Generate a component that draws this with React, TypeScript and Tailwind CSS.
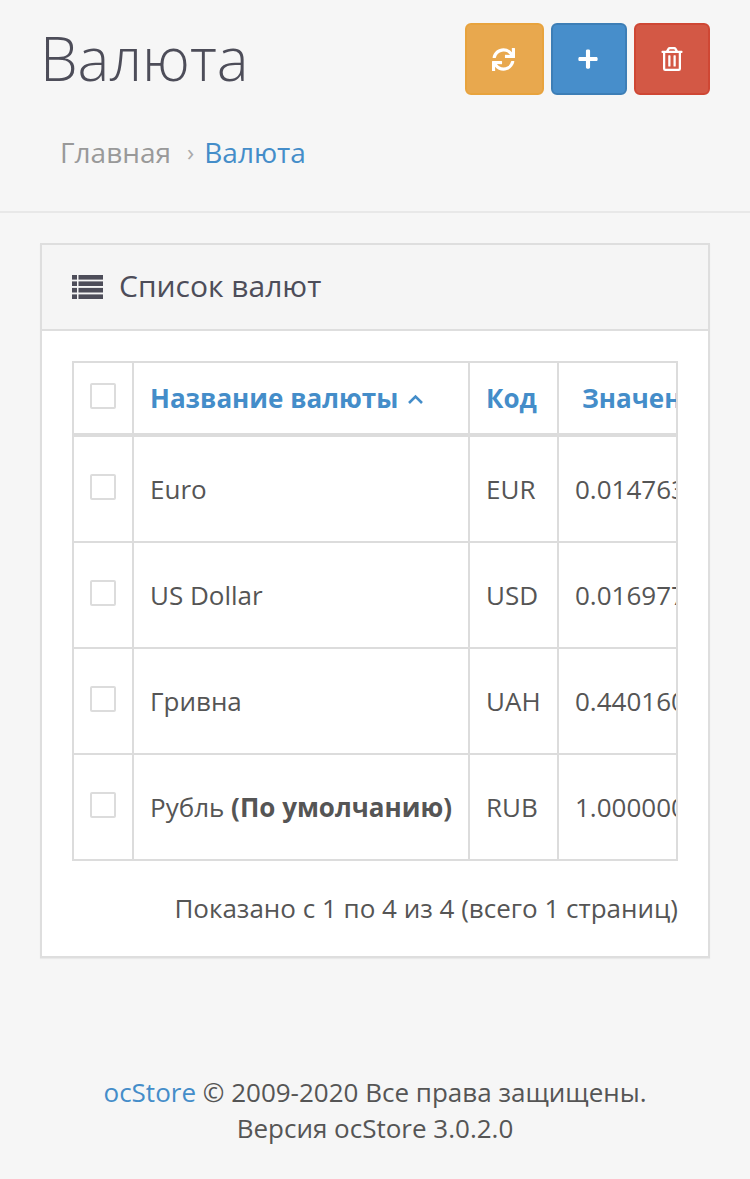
import { FaSync, FaPlus, FaRegTrashAlt } from "react-icons/fa";

const rows = [
  { name: "Euro", code: "EUR", value: "0.01476300" },
  { name: "US Dollar", code: "USD", value: "0.01697700" },
  { name: "Гривна", code: "UAH", value: "0.44016000" },
  { name: "Рубль", isDefault: true, code: "RUB", value: "1.00000000" },
];

function ListIcon() {
  return (
    <svg width="31" height="24" viewBox="0 0 31 24" fill="#4d4d59">
      <rect x="0" y="0" width="5" height="4.6" />
      <rect x="6.5" y="0" width="24.5" height="4.6" />
      <rect x="0" y="6.4" width="5" height="4.6" />
      <rect x="6.5" y="6.4" width="24.5" height="4.6" />
      <rect x="0" y="12.9" width="5" height="4.6" />
      <rect x="6.5" y="12.9" width="24.5" height="4.6" />
      <rect x="0" y="19.4" width="5" height="4.6" />
      <rect x="6.5" y="19.4" width="24.5" height="4.6" />
    </svg>
  );
}

function Check() {
  return <span className="block w-[26px] h-[26px] bg-white border-2 border-[#dcdcdc] rounded-[2px]" />;
}

export default function App() {
  return (
    <div className="w-[750px] min-h-[1179px] bg-[#f6f6f6] text-[#555] font-['Open_Sans',sans-serif]">
      <div className="h-[213px] border-b-2 border-[#e8e8e8] px-[40px] pt-[23px]">
        <div className="flex justify-between">
          <h1 className="text-[60px] leading-[70px] font-light text-[#4d4d59]">Валюта</h1>
          <div className="flex gap-[7px] h-[72px]">
            <button className="w-[79px] rounded-[6px] bg-[#e8a84e] border-2 border-[#e8a33d] text-white flex items-center justify-center pr-[2px]">
              <FaSync size={23} />
            </button>
            <button className="w-[76px] rounded-[6px] bg-[#478ecb] border-2 border-[#3d7eb6] text-white flex items-center justify-center pr-[2px]">
              <FaPlus size={22} />
            </button>
            <button className="w-[76px] rounded-[6px] bg-[#d35845] border-2 border-[#cf4734] text-white flex items-center justify-center">
              <FaRegTrashAlt size={24} />
            </button>
          </div>
        </div>
        <div className="flex items-center pl-[20px] mt-[39px] text-[28px] leading-[36px]">
          <span className="text-[#999]">Главная</span>
          <span className="text-[#aaa] ml-[16px] mr-[10px] text-[24px]">›</span>
          <span className="text-[#448dc9]">Валюта</span>
        </div>
      </div>

      <div className="ml-[40px] mt-[30px] w-[670px] h-[715px] border-2 border-[#dedede] bg-white shadow-[0_1px_1px_rgba(0,0,0,0.05)]">
        <div className="h-[86px] bg-[#f5f5f5] border-b-2 border-[#dedede] flex items-center pl-[30px] gap-[16px]">
          <ListIcon />
          <span className="text-[30px] text-[#4d4d59] leading-none pb-[2px]">Список валют</span>
        </div>
        <div className="mt-[30px] mx-[30px] overflow-hidden border-r-2 border-[#dcdcdc]">
          <table className="border-collapse table-fixed w-[700px] text-[26px]">
            <colgroup>
              <col className="w-[60px]" />
              <col className="w-[336px]" />
              <col className="w-[89px]" />
              <col className="w-[215px]" />
            </colgroup>
            <thead>
              <tr className="h-[73px]">
                <th className="border-2 border-b-[4px] border-[#dcdcdc] align-top pt-[20px] pl-[16px]">
                  <Check />
                </th>
                <th className="border-2 border-b-[4px] border-[#dcdcdc] text-left pl-[16px] font-bold text-[#448dc9] whitespace-nowrap">
                  Название валюты
                  <svg className="inline-block ml-[9px] mb-[3px]" width="17" height="10" viewBox="0 0 17 10" fill="none" stroke="#448dc9" strokeWidth="2.6">
                    <path d="M2 9l6.500-6.500 6.500 6.500" />
                  </svg>
                </th>
                <th className="border-2 border-b-[4px] border-[#dcdcdc] text-left pl-[16px] font-bold text-[#448dc9]">Код</th>
                <th className="border-2 border-b-[4px] border-[#dcdcdc] text-left pl-[23px] font-bold text-[#448dc9] whitespace-nowrap">Значение</th>
              </tr>
            </thead>
            <tbody>
              {rows.map((r, i) => (
                <tr key={r.code} className={i === 0 ? "h-[107px]" : "h-[106px]"}>
                  <td className="border-2 border-[#dcdcdc] align-top pt-[37px] pl-[16px]">
                    <Check />
                  </td>
                  <td className="border-2 border-[#dcdcdc] pl-[16px] pt-[1px] whitespace-nowrap">
                    {r.name}
                    {r.isDefault && <b className="font-bold"> (По умолчанию)</b>}
                  </td>
                  <td className="border-2 border-[#dcdcdc] pl-[16px] pt-[1px]">{r.code}</td>
                  <td className="border-2 border-[#dcdcdc] pl-[16px] pt-[1px]">{r.value}</td>
                </tr>
              ))}
            </tbody>
          </table>
        </div>
        <div className="mt-[29px] mr-[30px] text-right text-[26px] leading-[36px]">
          Показано с 1 по 4 из 4 (всего 1 страниц)
        </div>
      </div>

      <div className="mt-[116px] text-center text-[26px] leading-[36px]">
        <div>
          <span className="text-[#448dc9]">ocStore</span> © 2009-2020 Все права защищены.
        </div>
        <div>Версия ocStore 3.0.2.0</div>
      </div>
    </div>
  );
}
